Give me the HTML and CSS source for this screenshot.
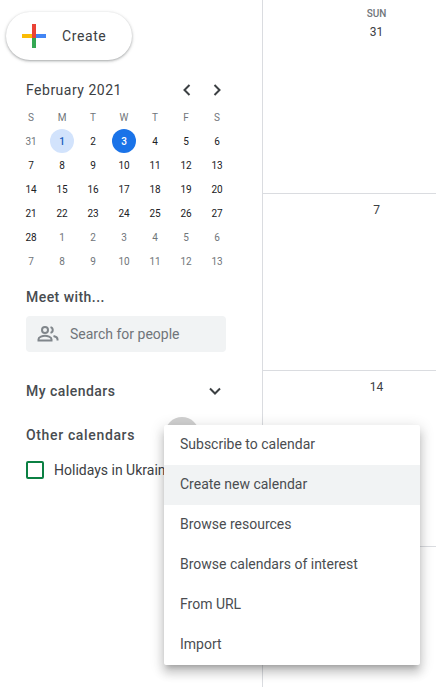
FILE: index.html
```html
<!DOCTYPE html>
<html lang="en">
<head>
    <meta charset="UTF-8">
    <title>Calendar</title>
    <link rel="stylesheet" href="styles.css">
</head>
<body>
    <div class="app">
        <aside class="sidebar">
            <button class="create-btn">
                <svg class="create-icon" width="24" height="24" viewBox="0 0 24 24">
                    <rect x="10" y="0" width="4" height="10" fill="#ea4335"/>
                    <rect x="14" y="10" width="10" height="4" fill="#4285f4"/>
                    <rect x="10" y="14" width="4" height="10" fill="#34a853"/>
                    <rect x="0" y="10" width="10" height="4" fill="#fbbc04"/>
                    <rect x="10" y="10" width="4" height="4" fill="#ea4335"/>
                </svg>
                <span>Create</span>
            </button>

            <div class="mini-head">
                <span class="mini-title">February 2021</span>
                <div class="mini-nav">
                    <svg width="20" height="20" viewBox="0 0 20 20"><path d="M12.500 5 7.500 10l5 5" fill="none" stroke="#3c4043" stroke-width="2"/></svg>
                    <svg width="20" height="20" viewBox="0 0 20 20"><path d="M7.500 5l5 5-5 5" fill="none" stroke="#3c4043" stroke-width="2"/></svg>
                </div>
            </div>

            <div class="mini-grid">
                <span class="wd">S</span><span class="wd">M</span><span class="wd">T</span><span class="wd">W</span><span class="wd">T</span><span class="wd">F</span><span class="wd">S</span>
                <span class="out">31</span><span class="day-one"><b>1</b></span><span>2</span><span class="today"><b>3</b></span><span>4</span><span>5</span><span>6</span>
                <span>7</span><span>8</span><span>9</span><span>10</span><span>11</span><span>12</span><span>13</span>
                <span>14</span><span>15</span><span>16</span><span>17</span><span>18</span><span>19</span><span>20</span>
                <span>21</span><span>22</span><span>23</span><span>24</span><span>25</span><span>26</span><span>27</span>
                <span>28</span><span class="out">1</span><span class="out">2</span><span class="out">3</span><span class="out">4</span><span class="out">5</span><span class="out">6</span>
                <span class="out">7</span><span class="out">8</span><span class="out">9</span><span class="out">10</span><span class="out">11</span><span class="out">12</span><span class="out">13</span>
            </div>

            <h3 class="meet-title">Meet with...</h3>
            <div class="people-search">
                <svg width="24" height="24" viewBox="0 0 24 24" fill="none" stroke="#80868b" stroke-width="2">
                    <circle cx="9" cy="8" r="3"/>
                    <path d="M2.500 18.500v-1.300c0-2.200 4.300-3.400 6.500-3.400s6.500 1.200 6.500 3.400v1.300z"/>
                    <path d="M14.500 5.100a3 3 0 0 1 0 5.800M17.500 13.900c2.300.5 4 1.500 4 3.300v1.300"/>
                </svg>
                <span>Search for people</span>
            </div>

            <div class="section-row my-cals">
                <h3>My calendars</h3>
                <svg width="20" height="20" viewBox="0 0 20 20"><path d="M5 7.500l5 5 5-5" fill="none" stroke="#3c4043" stroke-width="2"/></svg>
            </div>
            <div class="section-row other-cals">
                <h3>Other calendars</h3>
            </div>
            <div class="cal-item">
                <span class="check"></span>
                <span class="cal-name">Holidays in Ukraine</span>
            </div>
        </aside>

        <main class="day-col">
            <div class="day-cell first">
                <div class="wk-name">SUN</div>
                <div class="wk-num">31</div>
            </div>
            <div class="day-cell"><div class="wk-num">7</div></div>
            <div class="day-cell"><div class="wk-num">14</div></div>
            <div class="day-cell last"></div>
        </main>
    </div>

    <div class="hover-dot"></div>
    <ul class="menu">
        <li>Subscribe to calendar</li>
        <li class="active">Create new calendar</li>
        <li>Browse resources</li>
        <li>Browse calendars of interest</li>
        <li>From URL</li>
        <li>Import</li>
    </ul>
</body>
</html>
```

FILE: styles.css
```css
html, body {
    margin: 0;
    padding: 0;
    height: 100%;
    overflow: hidden;
}
body {
    font-family: Roboto, Arial, sans-serif;
    background-color: #fff;
    color: #3c4043;
}
.app {
    display: flex;
    height: 687px;
    overflow: hidden;
}
.sidebar {
    width: 262px;
    flex-shrink: 0;
    box-sizing: border-box;
    padding: 12px 0 0 0;
}
.create-btn {
    display: flex;
    align-items: center;
    gap: 16px;
    width: 126px;
    height: 48px;
    margin-left: 6px;
    padding: 0 0 0 16px;
    border: none;
    border-radius: 24px;
    background-color: #fff;
    box-shadow: 0 1px 2px rgba(60, 64, 67, 0.3), 0 1px 3px 1px rgba(60, 64, 67, 0.15);
    font-family: Roboto, Arial, sans-serif;
    font-size: 14px;
    font-weight: 400;
    letter-spacing: 0.6px;
    color: #3c4043;
}
.mini-head {
    display: flex;
    align-items: center;
    justify-content: space-between;
    margin-top: 20px;
    padding: 0 35px 0 26px;
    height: 20px;
}
.mini-title {
    font-size: 14px;
    font-weight: 400;
    letter-spacing: 0.5px;
}
.mini-nav {
    display: flex;
    gap: 10px;
}
.mini-grid {
    display: grid;
    grid-template-columns: repeat(7, 31px);
    grid-auto-rows: 24px;
    margin: 5px 0 0 15.500px;
    font-size: 10px;
    font-weight: 400;
    color: #202124;
}
.mini-grid span {
    display: flex;
    align-items: center;
    justify-content: center;
}
.mini-grid .wd,
.mini-grid .out {
    color: #70757a;
}
.mini-grid b {
    display: flex;
    align-items: center;
    justify-content: center;
    width: 24px;
    height: 24px;
    border-radius: 50%;
    font-weight: 500;
}
.day-one b {
    background-color: #d2e3fc;
    color: #185abc;
}
.today b {
    background-color: #1a73e8;
    color: #fff;
}
h3 {
    margin: 0;
    font-size: 14px;
    font-weight: 500;
    letter-spacing: 0.45px;
    color: #484c50;
}
.other-cals h3 {
    letter-spacing: 0.65px;
}
.meet-title {
    margin: 14px 0 0 26px;
    line-height: 20px;
}
.people-search {
    display: flex;
    align-items: center;
    gap: 10px;
    width: 200px;
    height: 36px;
    box-sizing: border-box;
    margin: 9px 0 0 26px;
    padding-left: 10px;
    background-color: #f1f3f4;
    border-radius: 4px;
    font-size: 14px;
    color: #70757a;
}
.section-row {
    display: flex;
    align-items: center;
    justify-content: space-between;
    height: 20px;
    padding: 0 37px 0 26px;
}
.my-cals {
    margin-top: 29px;
}
.other-cals {
    margin-top: 24px;
}
.cal-item {
    display: flex;
    align-items: center;
    gap: 10px;
    margin: 15px 0 0 26px;
    height: 20px;
    font-size: 14px;
    white-space: nowrap;
}
.check {
    width: 18px;
    height: 18px;
    box-sizing: border-box;
    border: 2px solid #0b8043;
    border-radius: 2px;
}
.day-col {
    width: 227px;
    flex-shrink: 0;
    display: flex;
    flex-direction: column;
    border-left: 1px solid #dadce0;
}
.day-cell {
    height: 176.500px;
    flex-shrink: 0;
    box-sizing: border-box;
    border-bottom: 1px solid #dadce0;
    padding-top: 8px;
    text-align: center;
    font-size: 12px;
    color: #3c4043;
}
.day-cell.first {
    height: 194px;
}
.day-cell.last {
    flex: 1;
    height: auto;
    border-bottom: none;
}
.wk-name {
    font-size: 10px;
    font-weight: 500;
    color: #70757a;
    line-height: 12px;
    margin-bottom: 4px;
}
.wk-num {
    line-height: 16px;
    font-size: 12px;
    font-weight: 400;
}
.hover-dot {
    position: absolute;
    left: 165px;
    top: 417px;
    width: 34px;
    height: 34px;
    border-radius: 50%;
    background-color: #d0d0d0;
}
.menu {
    position: absolute;
    left: 164px;
    top: 425px;
    width: 256px;
    margin: 0;
    padding: 0;
    list-style: none;
    background-color: #fff;
    border-radius: 2px;
    box-shadow: 0 8px 10px 1px rgba(0, 0, 0, 0.14), 0 3px 14px 2px rgba(0, 0, 0, 0.12), 0 5px 5px -3px rgba(0, 0, 0, 0.2);
    font-size: 14px;
    color: #4a4d51;
}
.menu li {
    height: 40px;
    line-height: 38px;
    padding-left: 16px;
}
.menu li.active {
    background-color: #f1f3f4;
}
```
